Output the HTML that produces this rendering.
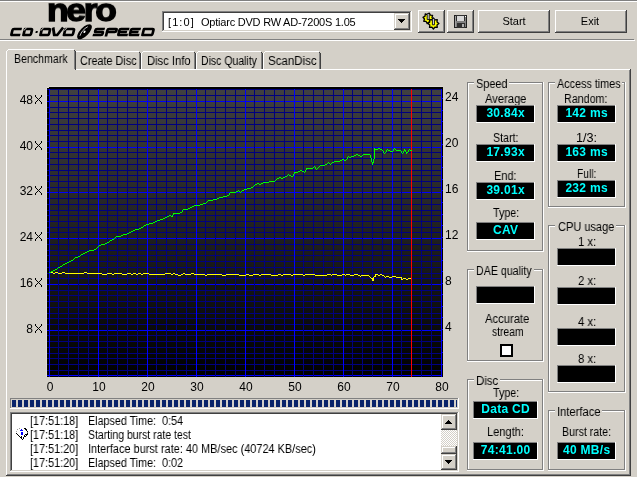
<!DOCTYPE html><html><head><meta charset="utf-8"><style>
html,body{margin:0;padding:0}
body{width:637px;height:477px;position:relative;overflow:hidden;background:#d4d0c8;font-family:"Liberation Sans",sans-serif;font-size:11px;color:#000}
.t{position:absolute;line-height:13px;white-space:pre;will-change:transform}
</style></head><body>
<div style="position:absolute;left:0px;top:0px;width:637px;height:1px;background:#808080;"></div>
<div style="position:absolute;left:0px;top:1px;width:637px;height:1px;background:#ffffff;"></div>
<div style="position:absolute;left:0px;top:39px;width:634px;height:1px;background:#808080;"></div>
<div style="position:absolute;left:0px;top:40px;width:635px;height:1px;background:#ffffff;"></div>
<div class="t" style="left:47px;top:-10.6px;font-size:34px;line-height:40px;font-weight:bold;letter-spacing:-2.2px;-webkit-text-stroke:1.4px #000;transform:scale(1.04,0.95);transform-origin:0 31px">nero</div>
<svg style="position:absolute;left:0;top:0" width="160" height="40"><g transform="translate(0,36) skewX(-14) translate(0,-36)"><path d="M20,29 H12 Q11,29 11,30 V34 Q11,35 12,35 H20 M23.2,29 H29.0 Q30.5,29 30.5,30.5 V33.5 Q30.5,35 29.0,35 H23.2 Z M40.2,29 H47.0 Q48.5,29 48.5,30.5 V33.5 Q48.5,35 47.0,35 H40.2 Z M51,27.5 L54,35 H57 L61,27.5 M63.7,29 H71.0 Q72.5,29 72.5,30.5 V33.5 Q72.5,35 71.0,35 H63.7 Z M103,29 H95 Q94,29 94,30 V31 Q94,32 95,32 H101 Q102,32 102,33 V34 Q102,35 101,35 H92.5 M106,36.5 V30 Q106,29 107,29 H114 Q115,29 115,30 V31 Q115,32 114,32 H106 M127.5,29 H119 Q118,29 118,30 V34 Q118,35 119,35 H127.5 M118,32 H126.0 M139.0,29 H130.5 Q129.5,29 129.5,30 V34 Q129.5,35 130.5,35 H139.0 M129.5,32 H137.5 M142.2,29 H150.5 Q152,29 152,30.5 V33.5 Q152,35 150.5,35 H142.2 Z" fill="none" stroke="#000" stroke-width="2.7" stroke-linejoin="round"/><rect x="34.6" y="31" width="2" height="2" fill="#000"/><path d="M22.4,30.6 L24.6,27.6" stroke="#d4d0c8" stroke-width="0.9"/><path d="M39.4,30.6 L41.6,27.6" stroke="#d4d0c8" stroke-width="0.9"/><path d="M62.9,30.6 L65.1,27.6" stroke="#d4d0c8" stroke-width="0.9"/></g><g transform="rotate(-46 84.5 31.8)"><ellipse cx="84.5" cy="31.8" rx="9.6" ry="4.3" fill="#000"/><path d="M78.5,31.3 Q84,28.6 90.5,30.6" stroke="#fff" stroke-width="0.7" fill="none"/><ellipse cx="84.5" cy="31.8" rx="1.3" ry="0.9" fill="#fff"/></g></svg>
<div style="position:absolute;left:162px;top:11px;width:250px;height:21px;background:#ffffff;"></div>
<div style="position:absolute;left:162px;top:11px;width:250px;height:1px;background:#808080;"></div>
<div style="position:absolute;left:162px;top:11px;width:1px;height:21px;background:#808080;"></div>
<div style="position:absolute;left:162px;top:31px;width:250px;height:1px;background:#ffffff;"></div>
<div style="position:absolute;left:411px;top:11px;width:1px;height:21px;background:#ffffff;"></div>
<div style="position:absolute;left:163px;top:12px;width:248px;height:1px;background:#404040;"></div>
<div style="position:absolute;left:163px;top:12px;width:1px;height:19px;background:#404040;"></div>
<div style="position:absolute;left:163px;top:30px;width:248px;height:1px;background:#d4d0c8;"></div>
<div style="position:absolute;left:410px;top:12px;width:1px;height:19px;background:#d4d0c8;"></div>
<div style="position:absolute;left:394px;top:13px;width:16px;height:17px;background:#d4d0c8;"></div>
<div style="position:absolute;left:395px;top:14px;width:14px;height:1px;background:#ffffff;"></div>
<div style="position:absolute;left:395px;top:14px;width:1px;height:15px;background:#ffffff;"></div>
<div style="position:absolute;left:394px;top:29px;width:16px;height:1px;background:#404040;"></div>
<div style="position:absolute;left:409px;top:13px;width:1px;height:17px;background:#404040;"></div>
<div style="position:absolute;left:395px;top:28px;width:14px;height:1px;background:#808080;"></div>
<div style="position:absolute;left:408px;top:14px;width:1px;height:15px;background:#808080;"></div>
<svg style="position:absolute;left:398px;top:19px" width="7" height="4" shape-rendering="crispEdges"><rect x="0" y="0" width="7" height="1"/><rect x="1" y="1" width="5" height="1"/><rect x="2" y="2" width="3" height="1"/><rect x="3" y="3" width="1" height="1"/></svg>
<div class="t" style="left:168px;top:16px;font-size:11px;font-weight:normal;color:#000;letter-spacing:1.1px">[1:0]</div>
<div class="t" style="left:201px;top:16px;font-size:11px;font-weight:normal;color:#000;letter-spacing:-0.22px">Optiarc DVD RW AD-7200S 1.05</div>
<div style="position:absolute;left:418px;top:10px;width:27px;height:1px;background:#ffffff;"></div>
<div style="position:absolute;left:418px;top:10px;width:1px;height:23px;background:#ffffff;"></div>
<div style="position:absolute;left:418px;top:32px;width:27px;height:1px;background:#404040;"></div>
<div style="position:absolute;left:444px;top:10px;width:1px;height:23px;background:#404040;"></div>
<div style="position:absolute;left:419px;top:31px;width:25px;height:1px;background:#808080;"></div>
<div style="position:absolute;left:443px;top:11px;width:1px;height:21px;background:#808080;"></div>
<div style="position:absolute;left:447px;top:10px;width:27px;height:1px;background:#ffffff;"></div>
<div style="position:absolute;left:447px;top:10px;width:1px;height:23px;background:#ffffff;"></div>
<div style="position:absolute;left:447px;top:32px;width:27px;height:1px;background:#404040;"></div>
<div style="position:absolute;left:473px;top:10px;width:1px;height:23px;background:#404040;"></div>
<div style="position:absolute;left:448px;top:31px;width:25px;height:1px;background:#808080;"></div>
<div style="position:absolute;left:472px;top:11px;width:1px;height:21px;background:#808080;"></div>
<div style="position:absolute;left:478px;top:10px;width:72px;height:1px;background:#ffffff;"></div>
<div style="position:absolute;left:478px;top:10px;width:1px;height:23px;background:#ffffff;"></div>
<div style="position:absolute;left:478px;top:32px;width:72px;height:1px;background:#404040;"></div>
<div style="position:absolute;left:549px;top:10px;width:1px;height:23px;background:#404040;"></div>
<div style="position:absolute;left:479px;top:31px;width:70px;height:1px;background:#808080;"></div>
<div style="position:absolute;left:548px;top:11px;width:1px;height:21px;background:#808080;"></div>
<div style="position:absolute;left:555px;top:10px;width:72px;height:1px;background:#ffffff;"></div>
<div style="position:absolute;left:555px;top:10px;width:1px;height:23px;background:#ffffff;"></div>
<div style="position:absolute;left:555px;top:32px;width:72px;height:1px;background:#404040;"></div>
<div style="position:absolute;left:626px;top:10px;width:1px;height:23px;background:#404040;"></div>
<div style="position:absolute;left:556px;top:31px;width:70px;height:1px;background:#808080;"></div>
<div style="position:absolute;left:625px;top:11px;width:1px;height:21px;background:#808080;"></div>
<svg style="position:absolute;left:418px;top:10px" width="27" height="23"><polygon points="15.39,9.35 13.35,10.42 13.13,12.72 10.93,12.03 9.15,13.49 8.08,11.45 5.78,11.23 6.47,9.03 5.01,7.25 7.05,6.18 7.27,3.88 9.47,4.57 11.25,3.11 12.32,5.15 14.62,5.37 13.93,7.57" fill="#ffff00" stroke="#000" stroke-width="1.3" stroke-linejoin="round"/><polygon points="20.90,13.50 19.00,14.99 19.29,17.39 16.89,17.10 15.40,19.00 13.91,17.10 11.51,17.39 11.80,14.99 9.90,13.50 11.80,12.01 11.51,9.61 13.91,9.90 15.40,8.00 16.89,9.90 19.29,9.61 19.00,12.01" fill="#ffff00" stroke="#000" stroke-width="1.3" stroke-linejoin="round"/><path d="M9.2,9.6 V4.4 L10.2,3.0 L11.2,4.4 V9.6 Z" fill="#e0e0f0" stroke="#000" stroke-width="0.9"/><path d="M14.4,14.8 V9.6 L15.4,8.2 L16.4,9.6 V14.8 Z" fill="#e0e0f0" stroke="#000" stroke-width="0.9"/></svg>
<svg style="position:absolute;left:454px;top:15px" width="13" height="13" shape-rendering="crispEdges"><rect x="0" y="0" width="13" height="13" fill="#202020"/><rect x="1" y="1" width="11" height="11" fill="#808080"/><rect x="1" y="1" width="1" height="11" fill="#a0a0a0"/><rect x="2" y="0" width="9" height="6" fill="#303030"/><rect x="3" y="1" width="7" height="5" fill="#d8d8d8"/><rect x="3" y="8" width="8" height="5" fill="#303030"/><rect x="8" y="9" width="2" height="3" fill="#b0b0b0"/><rect x="11" y="1" width="1" height="1" fill="#ffffff"/></svg>
<div class="t" style="left:414px;width:200px;text-align:center;top:15px;font-size:11px;font-weight:normal;color:#000;">Start</div>
<div class="t" style="left:490px;width:200px;text-align:center;top:15px;font-size:11px;font-weight:normal;color:#000;">Exit</div>
<div style="position:absolute;left:6px;top:69px;width:1px;height:406px;background:#ffffff;"></div>
<div style="position:absolute;left:6px;top:69px;width:624px;height:1px;background:#ffffff;"></div>
<div style="position:absolute;left:630px;top:69px;width:1px;height:407px;background:#404040;"></div>
<div style="position:absolute;left:629px;top:70px;width:1px;height:405px;background:#808080;"></div>
<div style="position:absolute;left:6px;top:475px;width:625px;height:1px;background:#404040;"></div>
<div style="position:absolute;left:7px;top:474px;width:623px;height:1px;background:#808080;"></div>
<div style="position:absolute;left:76px;top:51px;width:63px;height:1px;background:#ffffff;"></div>
<div style="position:absolute;left:74px;top:53px;width:1px;height:16px;background:#ffffff;"></div>
<div style="position:absolute;left:75px;top:52px;width:1px;height:1px;background:#ffffff;"></div>
<div style="position:absolute;left:139px;top:52px;width:1px;height:17px;background:#808080;"></div>
<div style="position:absolute;left:140px;top:53px;width:1px;height:16px;background:#404040;"></div>
<div style="position:absolute;left:139px;top:52px;width:1px;height:1px;background:#404040;"></div>
<div style="position:absolute;left:143px;top:51px;width:51px;height:1px;background:#ffffff;"></div>
<div style="position:absolute;left:141px;top:53px;width:1px;height:16px;background:#ffffff;"></div>
<div style="position:absolute;left:142px;top:52px;width:1px;height:1px;background:#ffffff;"></div>
<div style="position:absolute;left:194px;top:52px;width:1px;height:17px;background:#808080;"></div>
<div style="position:absolute;left:195px;top:53px;width:1px;height:16px;background:#404040;"></div>
<div style="position:absolute;left:194px;top:52px;width:1px;height:1px;background:#404040;"></div>
<div style="position:absolute;left:198px;top:51px;width:63px;height:1px;background:#ffffff;"></div>
<div style="position:absolute;left:196px;top:53px;width:1px;height:16px;background:#ffffff;"></div>
<div style="position:absolute;left:197px;top:52px;width:1px;height:1px;background:#ffffff;"></div>
<div style="position:absolute;left:261px;top:52px;width:1px;height:17px;background:#808080;"></div>
<div style="position:absolute;left:262px;top:53px;width:1px;height:16px;background:#404040;"></div>
<div style="position:absolute;left:261px;top:52px;width:1px;height:1px;background:#404040;"></div>
<div style="position:absolute;left:265px;top:51px;width:54px;height:1px;background:#ffffff;"></div>
<div style="position:absolute;left:263px;top:53px;width:1px;height:16px;background:#ffffff;"></div>
<div style="position:absolute;left:264px;top:52px;width:1px;height:1px;background:#ffffff;"></div>
<div style="position:absolute;left:319px;top:52px;width:1px;height:17px;background:#808080;"></div>
<div style="position:absolute;left:320px;top:53px;width:1px;height:16px;background:#404040;"></div>
<div style="position:absolute;left:319px;top:52px;width:1px;height:1px;background:#404040;"></div>
<div style="position:absolute;left:7px;top:50px;width:68px;height:20px;background:#d4d0c8;"></div>
<div style="position:absolute;left:8px;top:49px;width:66px;height:1px;background:#ffffff;"></div>
<div style="position:absolute;left:6px;top:51px;width:1px;height:19px;background:#ffffff;"></div>
<div style="position:absolute;left:7px;top:50px;width:1px;height:1px;background:#ffffff;"></div>
<div style="position:absolute;left:74px;top:50px;width:1px;height:20px;background:#808080;"></div>
<div style="position:absolute;left:75px;top:51px;width:1px;height:19px;background:#404040;"></div>
<div style="position:absolute;left:74px;top:50px;width:1px;height:1px;background:#404040;"></div>
<div style="position:absolute;left:7px;top:69px;width:68px;height:1px;background:#d4d0c8;"></div>
<div class="t" style="left:14.12px;top:53px;font-size:12px;transform:scaleX(0.8833);transform-origin:0 0;">Benchmark</div>
<div class="t" style="left:80.00px;top:55px;font-size:12px;transform:scaleX(0.9032);transform-origin:0 0;">Create Disc</div>
<div class="t" style="left:147.07px;top:55px;font-size:12px;transform:scaleX(0.9333);transform-origin:0 0;">Disc Info</div>
<div class="t" style="left:201.13px;top:55px;font-size:12px;transform:scaleX(0.8730);transform-origin:0 0;">Disc Quality</div>
<div class="t" style="left:268.04px;top:55px;font-size:12px;transform:scaleX(0.9592);transform-origin:0 0;">ScanDisc</div>
<svg style="position:absolute;left:46px;top:86px" width="398" height="292" shape-rendering="crispEdges">
<defs><linearGradient id="gr" x1="0" y1="0" x2="0" y2="1"><stop offset="0" stop-color="#404040"/><stop offset="1" stop-color="#000000"/></linearGradient></defs>
<rect x="0" y="2" width="1" height="289" fill="#dfdcd5"/>
<rect x="3" y="0" width="394" height="1" fill="#dfdcd5"/>
<rect x="1" y="1" width="2" height="1" fill="#dfdcd5"/>
<rect x="1" y="2" width="396" height="289" fill="#000"/>
<rect x="3" y="1" width="394" height="1" fill="#000"/>
<rect x="3" y="3" width="393" height="287" fill="url(#gr)"/>
<rect x="1" y="289" width="395" height="1" fill="#0000ff"/>
<rect x="1" y="284" width="395" height="1" fill="#000080"/>
<rect x="1" y="278" width="395" height="1" fill="#000080"/>
<rect x="1" y="272" width="395" height="1" fill="#000080"/>
<rect x="1" y="267" width="395" height="1" fill="#000080"/>
<rect x="1" y="261" width="395" height="1" fill="#000080"/>
<rect x="1" y="255" width="395" height="1" fill="#000080"/>
<rect x="1" y="249" width="395" height="1" fill="#000080"/>
<rect x="1" y="244" width="395" height="1" fill="#0000ff"/>
<rect x="1" y="238" width="395" height="1" fill="#000080"/>
<rect x="1" y="232" width="395" height="1" fill="#000080"/>
<rect x="1" y="227" width="395" height="1" fill="#000080"/>
<rect x="1" y="221" width="395" height="1" fill="#000080"/>
<rect x="1" y="215" width="395" height="1" fill="#000080"/>
<rect x="1" y="209" width="395" height="1" fill="#000080"/>
<rect x="1" y="204" width="395" height="1" fill="#000080"/>
<rect x="1" y="198" width="395" height="1" fill="#0000ff"/>
<rect x="1" y="192" width="395" height="1" fill="#000080"/>
<rect x="1" y="187" width="395" height="1" fill="#000080"/>
<rect x="1" y="181" width="395" height="1" fill="#000080"/>
<rect x="1" y="175" width="395" height="1" fill="#000080"/>
<rect x="1" y="169" width="395" height="1" fill="#000080"/>
<rect x="1" y="164" width="395" height="1" fill="#000080"/>
<rect x="1" y="158" width="395" height="1" fill="#000080"/>
<rect x="1" y="152" width="395" height="1" fill="#0000ff"/>
<rect x="1" y="146" width="395" height="1" fill="#000080"/>
<rect x="1" y="141" width="395" height="1" fill="#000080"/>
<rect x="1" y="135" width="395" height="1" fill="#000080"/>
<rect x="1" y="129" width="395" height="1" fill="#000080"/>
<rect x="1" y="124" width="395" height="1" fill="#000080"/>
<rect x="1" y="118" width="395" height="1" fill="#000080"/>
<rect x="1" y="112" width="395" height="1" fill="#000080"/>
<rect x="1" y="106" width="395" height="1" fill="#0000ff"/>
<rect x="1" y="101" width="395" height="1" fill="#000080"/>
<rect x="1" y="95" width="395" height="1" fill="#000080"/>
<rect x="1" y="89" width="395" height="1" fill="#000080"/>
<rect x="1" y="84" width="395" height="1" fill="#000080"/>
<rect x="1" y="78" width="395" height="1" fill="#000080"/>
<rect x="1" y="72" width="395" height="1" fill="#000080"/>
<rect x="1" y="66" width="395" height="1" fill="#000080"/>
<rect x="1" y="61" width="395" height="1" fill="#0000ff"/>
<rect x="1" y="55" width="395" height="1" fill="#000080"/>
<rect x="1" y="49" width="395" height="1" fill="#000080"/>
<rect x="1" y="44" width="395" height="1" fill="#000080"/>
<rect x="1" y="38" width="395" height="1" fill="#000080"/>
<rect x="1" y="32" width="395" height="1" fill="#000080"/>
<rect x="1" y="26" width="395" height="1" fill="#000080"/>
<rect x="1" y="21" width="395" height="1" fill="#000080"/>
<rect x="1" y="15" width="395" height="1" fill="#0000ff"/>
<rect x="1" y="9" width="395" height="1" fill="#000080"/>
<rect x="1" y="3" width="395" height="1" fill="#000080"/>
<rect x="3" y="3" width="1" height="288" fill="#0000ff"/>
<rect x="12" y="3" width="1" height="288" fill="#000080"/>
<rect x="22" y="3" width="1" height="288" fill="#000080"/>
<rect x="32" y="3" width="1" height="288" fill="#000080"/>
<rect x="42" y="3" width="1" height="288" fill="#000080"/>
<rect x="52" y="3" width="1" height="288" fill="#0000ff"/>
<rect x="61" y="3" width="1" height="288" fill="#000080"/>
<rect x="71" y="3" width="1" height="288" fill="#000080"/>
<rect x="81" y="3" width="1" height="288" fill="#000080"/>
<rect x="91" y="3" width="1" height="288" fill="#000080"/>
<rect x="101" y="3" width="1" height="288" fill="#0000ff"/>
<rect x="110" y="3" width="1" height="288" fill="#000080"/>
<rect x="120" y="3" width="1" height="288" fill="#000080"/>
<rect x="130" y="3" width="1" height="288" fill="#000080"/>
<rect x="140" y="3" width="1" height="288" fill="#000080"/>
<rect x="150" y="3" width="1" height="288" fill="#0000ff"/>
<rect x="159" y="3" width="1" height="288" fill="#000080"/>
<rect x="169" y="3" width="1" height="288" fill="#000080"/>
<rect x="179" y="3" width="1" height="288" fill="#000080"/>
<rect x="189" y="3" width="1" height="288" fill="#000080"/>
<rect x="199" y="3" width="1" height="288" fill="#0000ff"/>
<rect x="208" y="3" width="1" height="288" fill="#000080"/>
<rect x="218" y="3" width="1" height="288" fill="#000080"/>
<rect x="228" y="3" width="1" height="288" fill="#000080"/>
<rect x="238" y="3" width="1" height="288" fill="#000080"/>
<rect x="248" y="3" width="1" height="288" fill="#0000ff"/>
<rect x="257" y="3" width="1" height="288" fill="#000080"/>
<rect x="267" y="3" width="1" height="288" fill="#000080"/>
<rect x="277" y="3" width="1" height="288" fill="#000080"/>
<rect x="287" y="3" width="1" height="288" fill="#000080"/>
<rect x="297" y="3" width="1" height="288" fill="#0000ff"/>
<rect x="306" y="3" width="1" height="288" fill="#000080"/>
<rect x="316" y="3" width="1" height="288" fill="#000080"/>
<rect x="326" y="3" width="1" height="288" fill="#000080"/>
<rect x="336" y="3" width="1" height="288" fill="#000080"/>
<rect x="346" y="3" width="1" height="288" fill="#0000ff"/>
<rect x="355" y="3" width="1" height="288" fill="#000080"/>
<rect x="365" y="3" width="1" height="288" fill="#000080"/>
<rect x="375" y="3" width="1" height="288" fill="#000080"/>
<rect x="385" y="3" width="1" height="288" fill="#000080"/>
<rect x="395" y="3" width="1" height="288" fill="#0000ff"/>
<rect x="396" y="278" width="1" height="1" fill="#0000ff"/>
<rect x="396" y="266" width="1" height="1" fill="#0000ff"/>
<rect x="396" y="254" width="1" height="1" fill="#0000ff"/>
<rect x="396" y="243" width="1" height="1" fill="#0000ff"/>
<rect x="396" y="231" width="1" height="1" fill="#0000ff"/>
<rect x="396" y="220" width="1" height="1" fill="#0000ff"/>
<rect x="396" y="208" width="1" height="1" fill="#0000ff"/>
<rect x="396" y="197" width="1" height="1" fill="#0000ff"/>
<rect x="396" y="185" width="1" height="1" fill="#0000ff"/>
<rect x="396" y="174" width="1" height="1" fill="#0000ff"/>
<rect x="396" y="162" width="1" height="1" fill="#0000ff"/>
<rect x="396" y="151" width="1" height="1" fill="#0000ff"/>
<rect x="396" y="139" width="1" height="1" fill="#0000ff"/>
<rect x="396" y="128" width="1" height="1" fill="#0000ff"/>
<rect x="396" y="116" width="1" height="1" fill="#0000ff"/>
<rect x="396" y="104" width="1" height="1" fill="#0000ff"/>
<rect x="396" y="93" width="1" height="1" fill="#0000ff"/>
<rect x="396" y="81" width="1" height="1" fill="#0000ff"/>
<rect x="396" y="70" width="1" height="1" fill="#0000ff"/>
<rect x="396" y="58" width="1" height="1" fill="#0000ff"/>
<rect x="396" y="47" width="1" height="1" fill="#0000ff"/>
<rect x="396" y="35" width="1" height="1" fill="#0000ff"/>
<rect x="396" y="24" width="1" height="1" fill="#0000ff"/>
<rect x="396" y="12" width="1" height="1" fill="#0000ff"/>
<rect x="365" y="3" width="1" height="288" fill="#ff0000"/>
<g fill="#ffff00"><rect x="3" y="186" width="4" height="1"/><rect x="7" y="187" width="2" height="1"/><rect x="9" y="186" width="3" height="1"/><rect x="12" y="187" width="4" height="1"/><rect x="16" y="186" width="3" height="1"/><rect x="19" y="187" width="19" height="1"/><rect x="38" y="186" width="3" height="1"/><rect x="41" y="187" width="15" height="1"/><rect x="56" y="188" width="5" height="1"/><rect x="61" y="187" width="5" height="1"/><rect x="66" y="188" width="2" height="1"/><rect x="68" y="187" width="8" height="1"/><rect x="76" y="188" width="5" height="1"/><rect x="81" y="187" width="4" height="1"/><rect x="85" y="188" width="2" height="1"/><rect x="87" y="187" width="3" height="1"/><rect x="90" y="188" width="2" height="1"/><rect x="92" y="187" width="3" height="1"/><rect x="95" y="188" width="2" height="1"/><rect x="97" y="187" width="6" height="1"/><rect x="103" y="188" width="16" height="1"/><rect x="119" y="187" width="6" height="1"/><rect x="125" y="188" width="2" height="1"/><rect x="127" y="187" width="2" height="1"/><rect x="129" y="188" width="3" height="1"/><rect x="132" y="189" width="3" height="1"/><rect x="135" y="188" width="2" height="1"/><rect x="137" y="187" width="2" height="1"/><rect x="139" y="188" width="6" height="1"/><rect x="145" y="187" width="3" height="1"/><rect x="148" y="188" width="11" height="1"/><rect x="159" y="189" width="2" height="1"/><rect x="161" y="188" width="15" height="1"/><rect x="176" y="189" width="4" height="1"/><rect x="180" y="188" width="13" height="1"/><rect x="193" y="189" width="7" height="1"/><rect x="200" y="188" width="3" height="1"/><rect x="203" y="189" width="4" height="1"/><rect x="207" y="188" width="6" height="1"/><rect x="213" y="189" width="2" height="1"/><rect x="215" y="188" width="10" height="1"/><rect x="225" y="189" width="7" height="1"/><rect x="232" y="188" width="3" height="1"/><rect x="235" y="189" width="2" height="1"/><rect x="237" y="188" width="8" height="1"/><rect x="245" y="189" width="2" height="1"/><rect x="247" y="188" width="10" height="1"/><rect x="257" y="189" width="2" height="1"/><rect x="259" y="188" width="10" height="1"/><rect x="269" y="189" width="12" height="1"/><rect x="281" y="188" width="4" height="1"/><rect x="285" y="189" width="1" height="1"/><rect x="286" y="188" width="5" height="1"/><rect x="291" y="189" width="5" height="1"/><rect x="296" y="188" width="3" height="1"/><rect x="299" y="189" width="1" height="1"/><rect x="300" y="188" width="4" height="1"/><rect x="304" y="189" width="4" height="1"/><rect x="308" y="188" width="4" height="1"/><rect x="312" y="189" width="2" height="1"/><rect x="314" y="190" width="1" height="1"/><rect x="315" y="189" width="8" height="1"/><rect x="323" y="190" width="1" height="1"/><rect x="324" y="191" width="1" height="1"/><rect x="325" y="192" width="1" height="1"/><rect x="326" y="194" width="1" height="1"/><rect x="326" y="192" width="1" height="3"/><rect x="327" y="191" width="1" height="1"/><rect x="327" y="191" width="1" height="4"/><rect x="328" y="190" width="1" height="1"/><rect x="329" y="188" width="3" height="1"/><rect x="329" y="188" width="1" height="3"/><rect x="332" y="189" width="2" height="1"/><rect x="334" y="188" width="2" height="1"/><rect x="336" y="189" width="2" height="1"/><rect x="338" y="190" width="1" height="1"/><rect x="339" y="191" width="1" height="1"/><rect x="340" y="190" width="3" height="1"/><rect x="343" y="191" width="3" height="1"/><rect x="346" y="190" width="4" height="1"/><rect x="350" y="191" width="5" height="1"/><rect x="355" y="193" width="2" height="1"/><rect x="355" y="191" width="1" height="3"/><rect x="357" y="192" width="3" height="1"/><rect x="360" y="193" width="2" height="1"/><rect x="362" y="192" width="3" height="1"/></g>
<g fill="#00ff00"><rect x="53" y="159" width="2" height="1"/><rect x="328" y="67" width="1" height="1"/><rect x="338" y="67" width="1" height="1"/><rect x="356" y="67" width="1" height="1"/><rect x="360" y="67" width="1" height="1"/><rect x="127" y="127" width="7" height="1"/><rect x="328" y="63" width="4" height="1"/><rect x="334" y="63" width="2" height="1"/><rect x="341" y="63" width="1" height="1"/><rect x="347" y="63" width="1" height="1"/><rect x="349" y="63" width="1" height="1"/><rect x="358" y="63" width="1" height="1"/><rect x="363" y="63" width="1" height="1"/><rect x="43" y="164" width="5" height="1"/><rect x="310" y="68" width="2" height="1"/><rect x="317" y="68" width="7" height="1"/><rect x="328" y="68" width="1" height="1"/><rect x="98" y="139" width="2" height="1"/><rect x="148" y="119" width="6" height="1"/><rect x="296" y="73" width="2" height="1"/><rect x="300" y="73" width="1" height="1"/><rect x="325" y="73" width="1" height="1"/><rect x="327" y="73" width="1" height="1"/><rect x="328" y="64" width="1" height="1"/><rect x="336" y="64" width="1" height="1"/><rect x="340" y="64" width="1" height="1"/><rect x="342" y="64" width="2" height="1"/><rect x="347" y="64" width="1" height="1"/><rect x="350" y="64" width="5" height="1"/><rect x="358" y="64" width="2" height="1"/><rect x="362" y="64" width="1" height="1"/><rect x="364" y="64" width="2" height="1"/><rect x="260" y="83" width="1" height="1"/><rect x="270" y="83" width="1" height="1"/><rect x="173" y="111" width="4" height="1"/><rect x="328" y="65" width="1" height="1"/><rect x="337" y="65" width="1" height="1"/><rect x="340" y="65" width="1" height="1"/><rect x="344" y="65" width="3" height="1"/><rect x="355" y="65" width="1" height="1"/><rect x="357" y="65" width="1" height="1"/><rect x="359" y="65" width="1" height="1"/><rect x="362" y="65" width="1" height="1"/><rect x="103" y="137" width="4" height="1"/><rect x="190" y="105" width="2" height="1"/><rect x="193" y="105" width="1" height="1"/><rect x="195" y="105" width="1" height="1"/><rect x="294" y="74" width="2" height="1"/><rect x="298" y="74" width="2" height="1"/><rect x="325" y="74" width="1" height="1"/><rect x="327" y="74" width="1" height="1"/><rect x="64" y="154" width="2" height="1"/><rect x="233" y="91" width="2" height="1"/><rect x="237" y="91" width="2" height="1"/><rect x="162" y="114" width="5" height="1"/><rect x="288" y="75" width="6" height="1"/><rect x="325" y="75" width="1" height="1"/><rect x="327" y="75" width="1" height="1"/><rect x="41" y="165" width="2" height="1"/><rect x="217" y="96" width="6" height="1"/><rect x="95" y="141" width="2" height="1"/><rect x="328" y="66" width="1" height="1"/><rect x="337" y="66" width="1" height="1"/><rect x="339" y="66" width="1" height="1"/><rect x="355" y="66" width="1" height="1"/><rect x="357" y="66" width="1" height="1"/><rect x="360" y="66" width="2" height="1"/><rect x="279" y="78" width="2" height="1"/><rect x="284" y="78" width="1" height="1"/><rect x="326" y="78" width="1" height="1"/><rect x="184" y="106" width="6" height="1"/><rect x="194" y="106" width="1" height="1"/><rect x="252" y="85" width="2" height="1"/><rect x="256" y="85" width="2" height="1"/><rect x="259" y="85" width="1" height="1"/><rect x="55" y="158" width="4" height="1"/><rect x="48" y="163" width="2" height="1"/><rect x="302" y="70" width="1" height="1"/><rect x="305" y="70" width="3" height="1"/><rect x="314" y="70" width="2" height="1"/><rect x="324" y="70" width="1" height="1"/><rect x="328" y="70" width="1" height="1"/><rect x="301" y="72" width="1" height="1"/><rect x="325" y="72" width="1" height="1"/><rect x="328" y="72" width="1" height="1"/><rect x="89" y="143" width="4" height="1"/><rect x="121" y="130" width="2" height="1"/><rect x="125" y="130" width="2" height="1"/><rect x="260" y="82" width="7" height="1"/><rect x="269" y="82" width="1" height="1"/><rect x="271" y="82" width="1" height="1"/><rect x="301" y="71" width="1" height="1"/><rect x="303" y="71" width="2" height="1"/><rect x="324" y="71" width="1" height="1"/><rect x="328" y="71" width="1" height="1"/><rect x="308" y="69" width="2" height="1"/><rect x="312" y="69" width="2" height="1"/><rect x="316" y="69" width="1" height="1"/><rect x="324" y="69" width="1" height="1"/><rect x="328" y="69" width="1" height="1"/><rect x="75" y="149" width="2" height="1"/><rect x="267" y="81" width="1" height="1"/><rect x="269" y="81" width="1" height="1"/><rect x="272" y="81" width="1" height="1"/><rect x="160" y="116" width="1" height="1"/><rect x="32" y="170" width="2" height="1"/><rect x="328" y="62" width="1" height="1"/><rect x="332" y="62" width="2" height="1"/><rect x="348" y="62" width="1" height="1"/><rect x="37" y="167" width="2" height="1"/><rect x="239" y="90" width="2" height="1"/><rect x="245" y="90" width="2" height="1"/><rect x="117" y="132" width="2" height="1"/><rect x="171" y="112" width="2" height="1"/><rect x="198" y="103" width="3" height="1"/><rect x="52" y="160" width="1" height="1"/><rect x="242" y="88" width="1" height="1"/><rect x="247" y="88" width="1" height="1"/><rect x="209" y="98" width="2" height="1"/><rect x="213" y="98" width="2" height="1"/><rect x="177" y="110" width="4" height="1"/><rect x="229" y="94" width="1" height="1"/><rect x="205" y="101" width="2" height="1"/><rect x="100" y="138" width="3" height="1"/><rect x="154" y="118" width="3" height="1"/><rect x="137" y="123" width="5" height="1"/><rect x="66" y="153" width="2" height="1"/><rect x="231" y="92" width="2" height="1"/><rect x="235" y="92" width="2" height="1"/><rect x="25" y="174" width="2" height="1"/><rect x="111" y="134" width="3" height="1"/><rect x="29" y="171" width="3" height="1"/><rect x="144" y="121" width="2" height="1"/><rect x="223" y="95" width="6" height="1"/><rect x="274" y="79" width="5" height="1"/><rect x="192" y="104" width="1" height="1"/><rect x="196" y="104" width="2" height="1"/><rect x="123" y="129" width="2" height="1"/><rect x="126" y="129" width="1" height="1"/><rect x="70" y="150" width="5" height="1"/><rect x="63" y="155" width="1" height="1"/><rect x="93" y="142" width="2" height="1"/><rect x="21" y="176" width="2" height="1"/><rect x="9" y="183" width="2" height="1"/><rect x="12" y="181" width="2" height="1"/><rect x="254" y="84" width="2" height="1"/><rect x="259" y="84" width="1" height="1"/><rect x="77" y="148" width="4" height="1"/><rect x="27" y="173" width="1" height="1"/><rect x="167" y="113" width="4" height="1"/><rect x="136" y="125" width="1" height="1"/><rect x="281" y="77" width="1" height="1"/><rect x="283" y="77" width="1" height="1"/><rect x="285" y="77" width="1" height="1"/><rect x="326" y="77" width="1" height="1"/><rect x="201" y="102" width="4" height="1"/><rect x="39" y="166" width="2" height="1"/><rect x="241" y="89" width="1" height="1"/><rect x="243" y="89" width="2" height="1"/><rect x="247" y="89" width="1" height="1"/><rect x="119" y="131" width="2" height="1"/><rect x="59" y="157" width="2" height="1"/><rect x="268" y="80" width="1" height="1"/><rect x="273" y="80" width="1" height="1"/><rect x="282" y="76" width="1" height="1"/><rect x="286" y="76" width="2" height="1"/><rect x="326" y="76" width="2" height="1"/><rect x="157" y="117" width="3" height="1"/><rect x="211" y="97" width="2" height="1"/><rect x="215" y="97" width="2" height="1"/><rect x="5" y="185" width="2" height="1"/><rect x="51" y="161" width="1" height="1"/><rect x="181" y="109" width="2" height="1"/><rect x="23" y="175" width="2" height="1"/><rect x="69" y="151" width="1" height="1"/><rect x="109" y="135" width="2" height="1"/><rect x="14" y="180" width="2" height="1"/><rect x="146" y="120" width="2" height="1"/><rect x="114" y="133" width="3" height="1"/><rect x="85" y="145" width="2" height="1"/><rect x="248" y="86" width="4" height="1"/><rect x="258" y="86" width="1" height="1"/><rect x="81" y="147" width="2" height="1"/><rect x="208" y="99" width="1" height="1"/><rect x="61" y="156" width="2" height="1"/><rect x="19" y="177" width="2" height="1"/><rect x="127" y="128" width="1" height="1"/><rect x="11" y="182" width="1" height="1"/><rect x="142" y="122" width="2" height="1"/><rect x="107" y="136" width="2" height="1"/><rect x="34" y="169" width="1" height="1"/><rect x="7" y="184" width="2" height="1"/><rect x="183" y="108" width="1" height="1"/><rect x="3" y="186" width="2" height="1"/><rect x="134" y="126" width="2" height="1"/><rect x="87" y="144" width="2" height="1"/><rect x="183" y="107" width="1" height="1"/><rect x="161" y="115" width="1" height="1"/><rect x="17" y="178" width="2" height="1"/><rect x="68" y="152" width="1" height="1"/><rect x="83" y="146" width="2" height="1"/><rect x="35" y="168" width="2" height="1"/><rect x="248" y="87" width="1" height="1"/><rect x="136" y="124" width="1" height="1"/><rect x="28" y="172" width="1" height="1"/><rect x="97" y="140" width="1" height="1"/><rect x="16" y="179" width="1" height="1"/><rect x="207" y="100" width="1" height="1"/><rect x="230" y="93" width="1" height="1"/><rect x="50" y="162" width="1" height="1"/></g>
</svg>
<div class="t" style="left:0;width:33px;text-align:right;top:94px;font-size:12px">48</div>
<svg style="position:absolute;left:35px;top:95px" width="7" height="9" shape-rendering="crispEdges"><rect x="0" y="0" width="1" height="1"/><rect x="0" y="1" width="1" height="1"/><rect x="6" y="0" width="1" height="1"/><rect x="6" y="1" width="1" height="1"/><rect x="1" y="2" width="1" height="1"/><rect x="5" y="2" width="1" height="1"/><rect x="2" y="3" width="1" height="1"/><rect x="4" y="3" width="1" height="1"/><rect x="3" y="4" width="1" height="1"/><rect x="2" y="5" width="1" height="1"/><rect x="4" y="5" width="1" height="1"/><rect x="1" y="6" width="1" height="1"/><rect x="5" y="6" width="1" height="1"/><rect x="0" y="7" width="1" height="1"/><rect x="0" y="8" width="1" height="1"/><rect x="6" y="7" width="1" height="1"/><rect x="6" y="8" width="1" height="1"/></svg>
<div class="t" style="left:0;width:33px;text-align:right;top:140px;font-size:12px">40</div>
<svg style="position:absolute;left:35px;top:141px" width="7" height="9" shape-rendering="crispEdges"><rect x="0" y="0" width="1" height="1"/><rect x="0" y="1" width="1" height="1"/><rect x="6" y="0" width="1" height="1"/><rect x="6" y="1" width="1" height="1"/><rect x="1" y="2" width="1" height="1"/><rect x="5" y="2" width="1" height="1"/><rect x="2" y="3" width="1" height="1"/><rect x="4" y="3" width="1" height="1"/><rect x="3" y="4" width="1" height="1"/><rect x="2" y="5" width="1" height="1"/><rect x="4" y="5" width="1" height="1"/><rect x="1" y="6" width="1" height="1"/><rect x="5" y="6" width="1" height="1"/><rect x="0" y="7" width="1" height="1"/><rect x="0" y="8" width="1" height="1"/><rect x="6" y="7" width="1" height="1"/><rect x="6" y="8" width="1" height="1"/></svg>
<div class="t" style="left:0;width:33px;text-align:right;top:185px;font-size:12px">32</div>
<svg style="position:absolute;left:35px;top:186px" width="7" height="9" shape-rendering="crispEdges"><rect x="0" y="0" width="1" height="1"/><rect x="0" y="1" width="1" height="1"/><rect x="6" y="0" width="1" height="1"/><rect x="6" y="1" width="1" height="1"/><rect x="1" y="2" width="1" height="1"/><rect x="5" y="2" width="1" height="1"/><rect x="2" y="3" width="1" height="1"/><rect x="4" y="3" width="1" height="1"/><rect x="3" y="4" width="1" height="1"/><rect x="2" y="5" width="1" height="1"/><rect x="4" y="5" width="1" height="1"/><rect x="1" y="6" width="1" height="1"/><rect x="5" y="6" width="1" height="1"/><rect x="0" y="7" width="1" height="1"/><rect x="0" y="8" width="1" height="1"/><rect x="6" y="7" width="1" height="1"/><rect x="6" y="8" width="1" height="1"/></svg>
<div class="t" style="left:0;width:33px;text-align:right;top:231px;font-size:12px">24</div>
<svg style="position:absolute;left:35px;top:232px" width="7" height="9" shape-rendering="crispEdges"><rect x="0" y="0" width="1" height="1"/><rect x="0" y="1" width="1" height="1"/><rect x="6" y="0" width="1" height="1"/><rect x="6" y="1" width="1" height="1"/><rect x="1" y="2" width="1" height="1"/><rect x="5" y="2" width="1" height="1"/><rect x="2" y="3" width="1" height="1"/><rect x="4" y="3" width="1" height="1"/><rect x="3" y="4" width="1" height="1"/><rect x="2" y="5" width="1" height="1"/><rect x="4" y="5" width="1" height="1"/><rect x="1" y="6" width="1" height="1"/><rect x="5" y="6" width="1" height="1"/><rect x="0" y="7" width="1" height="1"/><rect x="0" y="8" width="1" height="1"/><rect x="6" y="7" width="1" height="1"/><rect x="6" y="8" width="1" height="1"/></svg>
<div class="t" style="left:0;width:33px;text-align:right;top:277px;font-size:12px">16</div>
<svg style="position:absolute;left:35px;top:278px" width="7" height="9" shape-rendering="crispEdges"><rect x="0" y="0" width="1" height="1"/><rect x="0" y="1" width="1" height="1"/><rect x="6" y="0" width="1" height="1"/><rect x="6" y="1" width="1" height="1"/><rect x="1" y="2" width="1" height="1"/><rect x="5" y="2" width="1" height="1"/><rect x="2" y="3" width="1" height="1"/><rect x="4" y="3" width="1" height="1"/><rect x="3" y="4" width="1" height="1"/><rect x="2" y="5" width="1" height="1"/><rect x="4" y="5" width="1" height="1"/><rect x="1" y="6" width="1" height="1"/><rect x="5" y="6" width="1" height="1"/><rect x="0" y="7" width="1" height="1"/><rect x="0" y="8" width="1" height="1"/><rect x="6" y="7" width="1" height="1"/><rect x="6" y="8" width="1" height="1"/></svg>
<div class="t" style="left:0;width:33px;text-align:right;top:323px;font-size:12px">8</div>
<svg style="position:absolute;left:35px;top:324px" width="7" height="9" shape-rendering="crispEdges"><rect x="0" y="0" width="1" height="1"/><rect x="0" y="1" width="1" height="1"/><rect x="6" y="0" width="1" height="1"/><rect x="6" y="1" width="1" height="1"/><rect x="1" y="2" width="1" height="1"/><rect x="5" y="2" width="1" height="1"/><rect x="2" y="3" width="1" height="1"/><rect x="4" y="3" width="1" height="1"/><rect x="3" y="4" width="1" height="1"/><rect x="2" y="5" width="1" height="1"/><rect x="4" y="5" width="1" height="1"/><rect x="1" y="6" width="1" height="1"/><rect x="5" y="6" width="1" height="1"/><rect x="0" y="7" width="1" height="1"/><rect x="0" y="8" width="1" height="1"/><rect x="6" y="7" width="1" height="1"/><rect x="6" y="8" width="1" height="1"/></svg>
<div class="t" style="left:445px;top:91px;font-size:12px">24</div>
<div class="t" style="left:445px;top:137px;font-size:12px">20</div>
<div class="t" style="left:445px;top:183px;font-size:12px">16</div>
<div class="t" style="left:445px;top:229px;font-size:12px">12</div>
<div class="t" style="left:445px;top:275px;font-size:12px">8</div>
<div class="t" style="left:445px;top:321px;font-size:12px">4</div>
<div class="t" style="left:0px;width:100px;text-align:center;top:381px;font-size:12px">0</div>
<div class="t" style="left:49px;width:100px;text-align:center;top:381px;font-size:12px">10</div>
<div class="t" style="left:98px;width:100px;text-align:center;top:381px;font-size:12px">20</div>
<div class="t" style="left:147px;width:100px;text-align:center;top:381px;font-size:12px">30</div>
<div class="t" style="left:196px;width:100px;text-align:center;top:381px;font-size:12px">40</div>
<div class="t" style="left:245px;width:100px;text-align:center;top:381px;font-size:12px">50</div>
<div class="t" style="left:294px;width:100px;text-align:center;top:381px;font-size:12px">60</div>
<div class="t" style="left:343px;width:100px;text-align:center;top:381px;font-size:12px">70</div>
<div class="t" style="left:392px;width:100px;text-align:center;top:381px;font-size:12px">80</div>
<div style="position:absolute;left:467px;top:82px;width:77px;height:1px;background:#808080;"></div>
<div style="position:absolute;left:467px;top:82px;width:1px;height:170px;background:#808080;"></div>
<div style="position:absolute;left:467px;top:251px;width:77px;height:1px;background:#ffffff;"></div>
<div style="position:absolute;left:543px;top:82px;width:1px;height:170px;background:#ffffff;"></div>
<div style="position:absolute;left:468px;top:83px;width:75px;height:1px;background:#ffffff;"></div>
<div style="position:absolute;left:468px;top:83px;width:1px;height:168px;background:#ffffff;"></div>
<div style="position:absolute;left:468px;top:250px;width:75px;height:1px;background:#808080;"></div>
<div style="position:absolute;left:542px;top:83px;width:1px;height:168px;background:#808080;"></div>
<div style="position:absolute;left:474px;top:82px;width:35px;height:2px;background:#d4d0c8;"></div>
<div class="t" style="left:476.09px;top:78px;font-size:12px;transform:scaleX(0.9091);transform-origin:0 0;">Speed</div>
<div class="t" style="left:485.00px;top:93px;font-size:12px;transform:scaleX(0.9318);transform-origin:0 0;">Average</div>
<div style="position:absolute;left:476px;top:105px;width:59px;height:18px;background:#000;"></div>
<div style="position:absolute;left:476px;top:105px;width:59px;height:1px;background:#808080;"></div>
<div style="position:absolute;left:476px;top:105px;width:1px;height:18px;background:#808080;"></div>
<div style="position:absolute;left:476px;top:122px;width:59px;height:1px;background:#ffffff;"></div>
<div style="position:absolute;left:534px;top:105px;width:1px;height:18px;background:#ffffff;"></div>
<div class="t" style="left:476px;width:59px;text-align:center;top:107px;font-size:12px;font-weight:bold;color:#00ffff;letter-spacing:0.3px;text-indent:0.3px">30.84x</div>
<div class="t" style="left:493.11px;top:132px;font-size:12px;transform:scaleX(0.8889);transform-origin:0 0;">Start:</div>
<div style="position:absolute;left:476px;top:144px;width:59px;height:18px;background:#000;"></div>
<div style="position:absolute;left:476px;top:144px;width:59px;height:1px;background:#808080;"></div>
<div style="position:absolute;left:476px;top:144px;width:1px;height:18px;background:#808080;"></div>
<div style="position:absolute;left:476px;top:161px;width:59px;height:1px;background:#ffffff;"></div>
<div style="position:absolute;left:534px;top:144px;width:1px;height:18px;background:#ffffff;"></div>
<div class="t" style="left:476px;width:59px;text-align:center;top:146px;font-size:12px;font-weight:bold;color:#00ffff;letter-spacing:0.3px;text-indent:0.3px">17.93x</div>
<div class="t" style="left:494.09px;top:170px;font-size:12px;transform:scaleX(0.9130);transform-origin:0 0;">End:</div>
<div style="position:absolute;left:476px;top:182px;width:59px;height:18px;background:#000;"></div>
<div style="position:absolute;left:476px;top:182px;width:59px;height:1px;background:#808080;"></div>
<div style="position:absolute;left:476px;top:182px;width:1px;height:18px;background:#808080;"></div>
<div style="position:absolute;left:476px;top:199px;width:59px;height:1px;background:#ffffff;"></div>
<div style="position:absolute;left:534px;top:182px;width:1px;height:18px;background:#ffffff;"></div>
<div class="t" style="left:476px;width:59px;text-align:center;top:184px;font-size:12px;font-weight:bold;color:#00ffff;letter-spacing:0.3px;text-indent:0.3px">39.01x</div>
<div class="t" style="left:493.00px;top:207px;font-size:12px;transform:scaleX(0.8929);transform-origin:0 0;">Type:</div>
<div style="position:absolute;left:476px;top:222px;width:59px;height:18px;background:#000;"></div>
<div style="position:absolute;left:476px;top:222px;width:59px;height:1px;background:#808080;"></div>
<div style="position:absolute;left:476px;top:222px;width:1px;height:18px;background:#808080;"></div>
<div style="position:absolute;left:476px;top:239px;width:59px;height:1px;background:#ffffff;"></div>
<div style="position:absolute;left:534px;top:222px;width:1px;height:18px;background:#ffffff;"></div>
<div class="t" style="left:476px;width:59px;text-align:center;top:224px;font-size:12px;font-weight:bold;color:#00ffff;letter-spacing:0.3px;text-indent:0.3px">CAV</div>
<div style="position:absolute;left:548px;top:82px;width:78px;height:1px;background:#808080;"></div>
<div style="position:absolute;left:548px;top:82px;width:1px;height:126px;background:#808080;"></div>
<div style="position:absolute;left:548px;top:207px;width:78px;height:1px;background:#ffffff;"></div>
<div style="position:absolute;left:625px;top:82px;width:1px;height:126px;background:#ffffff;"></div>
<div style="position:absolute;left:549px;top:83px;width:76px;height:1px;background:#ffffff;"></div>
<div style="position:absolute;left:549px;top:83px;width:1px;height:124px;background:#ffffff;"></div>
<div style="position:absolute;left:549px;top:206px;width:76px;height:1px;background:#808080;"></div>
<div style="position:absolute;left:624px;top:83px;width:1px;height:124px;background:#808080;"></div>
<div style="position:absolute;left:555px;top:82px;width:67px;height:2px;background:#d4d0c8;"></div>
<div class="t" style="left:557.00px;top:78px;font-size:12px;transform:scaleX(0.9000);transform-origin:0 0;">Access times</div>
<div class="t" style="left:564.11px;top:93px;font-size:12px;transform:scaleX(0.8936);transform-origin:0 0;">Random:</div>
<div style="position:absolute;left:557px;top:105px;width:59px;height:18px;background:#000;"></div>
<div style="position:absolute;left:557px;top:105px;width:59px;height:1px;background:#808080;"></div>
<div style="position:absolute;left:557px;top:105px;width:1px;height:18px;background:#808080;"></div>
<div style="position:absolute;left:557px;top:122px;width:59px;height:1px;background:#ffffff;"></div>
<div style="position:absolute;left:615px;top:105px;width:1px;height:18px;background:#ffffff;"></div>
<div class="t" style="left:557px;width:59px;text-align:center;top:107px;font-size:12px;font-weight:bold;color:#00ffff;letter-spacing:0.3px;text-indent:0.3px">142 ms</div>
<div class="t" style="left:575.94px;top:132px;font-size:12px;transform:scaleX(1.0556);transform-origin:0 0;">1/3:</div>
<div style="position:absolute;left:557px;top:144px;width:59px;height:18px;background:#000;"></div>
<div style="position:absolute;left:557px;top:144px;width:59px;height:1px;background:#808080;"></div>
<div style="position:absolute;left:557px;top:144px;width:1px;height:18px;background:#808080;"></div>
<div style="position:absolute;left:557px;top:161px;width:59px;height:1px;background:#ffffff;"></div>
<div style="position:absolute;left:615px;top:144px;width:1px;height:18px;background:#ffffff;"></div>
<div class="t" style="left:557px;width:59px;text-align:center;top:146px;font-size:12px;font-weight:bold;color:#00ffff;letter-spacing:0.3px;text-indent:0.3px">163 ms</div>
<div class="t" style="left:577.14px;top:168px;font-size:12px;transform:scaleX(0.8571);transform-origin:0 0;">Full:</div>
<div style="position:absolute;left:557px;top:180px;width:59px;height:18px;background:#000;"></div>
<div style="position:absolute;left:557px;top:180px;width:59px;height:1px;background:#808080;"></div>
<div style="position:absolute;left:557px;top:180px;width:1px;height:18px;background:#808080;"></div>
<div style="position:absolute;left:557px;top:197px;width:59px;height:1px;background:#ffffff;"></div>
<div style="position:absolute;left:615px;top:180px;width:1px;height:18px;background:#ffffff;"></div>
<div class="t" style="left:557px;width:59px;text-align:center;top:182px;font-size:12px;font-weight:bold;color:#00ffff;letter-spacing:0.3px;text-indent:0.3px">232 ms</div>
<div style="position:absolute;left:548px;top:225px;width:78px;height:1px;background:#808080;"></div>
<div style="position:absolute;left:548px;top:225px;width:1px;height:168px;background:#808080;"></div>
<div style="position:absolute;left:548px;top:392px;width:78px;height:1px;background:#ffffff;"></div>
<div style="position:absolute;left:625px;top:225px;width:1px;height:168px;background:#ffffff;"></div>
<div style="position:absolute;left:549px;top:226px;width:76px;height:1px;background:#ffffff;"></div>
<div style="position:absolute;left:549px;top:226px;width:1px;height:166px;background:#ffffff;"></div>
<div style="position:absolute;left:549px;top:391px;width:76px;height:1px;background:#808080;"></div>
<div style="position:absolute;left:624px;top:226px;width:1px;height:166px;background:#808080;"></div>
<div style="position:absolute;left:555px;top:225px;width:61px;height:2px;background:#d4d0c8;"></div>
<div class="t" style="left:558.00px;top:221px;font-size:12px;transform:scaleX(0.9180);transform-origin:0 0;">CPU usage</div>
<div class="t" style="left:578.06px;top:236px;font-size:12px;transform:scaleX(0.9412);transform-origin:0 0;">1 x:</div>
<div style="position:absolute;left:557px;top:248px;width:59px;height:18px;background:#000;"></div>
<div style="position:absolute;left:557px;top:248px;width:59px;height:1px;background:#808080;"></div>
<div style="position:absolute;left:557px;top:248px;width:1px;height:18px;background:#808080;"></div>
<div style="position:absolute;left:557px;top:265px;width:59px;height:1px;background:#ffffff;"></div>
<div style="position:absolute;left:615px;top:248px;width:1px;height:18px;background:#ffffff;"></div>
<div class="t" style="left:578.00px;top:275px;font-size:12px;transform:scaleX(0.9444);transform-origin:0 0;">2 x:</div>
<div style="position:absolute;left:557px;top:287px;width:59px;height:18px;background:#000;"></div>
<div style="position:absolute;left:557px;top:287px;width:59px;height:1px;background:#808080;"></div>
<div style="position:absolute;left:557px;top:287px;width:1px;height:18px;background:#808080;"></div>
<div style="position:absolute;left:557px;top:304px;width:59px;height:1px;background:#ffffff;"></div>
<div style="position:absolute;left:615px;top:287px;width:1px;height:18px;background:#ffffff;"></div>
<div class="t" style="left:578.00px;top:316px;font-size:12px;transform:scaleX(0.9444);transform-origin:0 0;">4 x:</div>
<div style="position:absolute;left:557px;top:328px;width:59px;height:18px;background:#000;"></div>
<div style="position:absolute;left:557px;top:328px;width:59px;height:1px;background:#808080;"></div>
<div style="position:absolute;left:557px;top:328px;width:1px;height:18px;background:#808080;"></div>
<div style="position:absolute;left:557px;top:345px;width:59px;height:1px;background:#ffffff;"></div>
<div style="position:absolute;left:615px;top:328px;width:1px;height:18px;background:#ffffff;"></div>
<div class="t" style="left:578.00px;top:353px;font-size:12px;transform:scaleX(0.9444);transform-origin:0 0;">8 x:</div>
<div style="position:absolute;left:557px;top:365px;width:59px;height:18px;background:#000;"></div>
<div style="position:absolute;left:557px;top:365px;width:59px;height:1px;background:#808080;"></div>
<div style="position:absolute;left:557px;top:365px;width:1px;height:18px;background:#808080;"></div>
<div style="position:absolute;left:557px;top:382px;width:59px;height:1px;background:#ffffff;"></div>
<div style="position:absolute;left:615px;top:365px;width:1px;height:18px;background:#ffffff;"></div>
<div style="position:absolute;left:467px;top:269px;width:77px;height:1px;background:#808080;"></div>
<div style="position:absolute;left:467px;top:269px;width:1px;height:93px;background:#808080;"></div>
<div style="position:absolute;left:467px;top:361px;width:77px;height:1px;background:#ffffff;"></div>
<div style="position:absolute;left:543px;top:269px;width:1px;height:93px;background:#ffffff;"></div>
<div style="position:absolute;left:468px;top:270px;width:75px;height:1px;background:#ffffff;"></div>
<div style="position:absolute;left:468px;top:270px;width:1px;height:91px;background:#ffffff;"></div>
<div style="position:absolute;left:468px;top:360px;width:75px;height:1px;background:#808080;"></div>
<div style="position:absolute;left:542px;top:270px;width:1px;height:91px;background:#808080;"></div>
<div style="position:absolute;left:474px;top:269px;width:60px;height:2px;background:#d4d0c8;"></div>
<div class="t" style="left:476.11px;top:265px;font-size:12px;transform:scaleX(0.8871);transform-origin:0 0;">DAE quality</div>
<div style="position:absolute;left:476px;top:286px;width:59px;height:18px;background:#000;"></div>
<div style="position:absolute;left:476px;top:286px;width:59px;height:1px;background:#808080;"></div>
<div style="position:absolute;left:476px;top:286px;width:1px;height:18px;background:#808080;"></div>
<div style="position:absolute;left:476px;top:303px;width:59px;height:1px;background:#ffffff;"></div>
<div style="position:absolute;left:534px;top:286px;width:1px;height:18px;background:#ffffff;"></div>
<div class="t" style="left:485.00px;top:313px;font-size:12px;transform:scaleX(0.9362);transform-origin:0 0;">Accurate</div>
<div class="t" style="left:492.00px;top:326px;font-size:12px;transform:scaleX(0.8611);transform-origin:0 0;">stream</div>
<div style="position:absolute;left:500px;top:344px;width:13px;height:13px;background:#000;"></div>
<div style="position:absolute;left:502px;top:346px;width:9px;height:9px;background:#fff;"></div>
<div style="position:absolute;left:467px;top:379px;width:77px;height:1px;background:#808080;"></div>
<div style="position:absolute;left:467px;top:379px;width:1px;height:92px;background:#808080;"></div>
<div style="position:absolute;left:467px;top:470px;width:77px;height:1px;background:#ffffff;"></div>
<div style="position:absolute;left:543px;top:379px;width:1px;height:92px;background:#ffffff;"></div>
<div style="position:absolute;left:468px;top:380px;width:75px;height:1px;background:#ffffff;"></div>
<div style="position:absolute;left:468px;top:380px;width:1px;height:90px;background:#ffffff;"></div>
<div style="position:absolute;left:468px;top:469px;width:75px;height:1px;background:#808080;"></div>
<div style="position:absolute;left:542px;top:380px;width:1px;height:90px;background:#808080;"></div>
<div style="position:absolute;left:474px;top:379px;width:26px;height:2px;background:#d4d0c8;"></div>
<div class="t" style="left:476.05px;top:375px;font-size:12px;transform:scaleX(0.9545);transform-origin:0 0;">Disc</div>
<div class="t" style="left:493.00px;top:387px;font-size:12px;transform:scaleX(0.8929);transform-origin:0 0;">Type:</div>
<div style="position:absolute;left:473px;top:401px;width:65px;height:18px;background:#000;"></div>
<div style="position:absolute;left:473px;top:401px;width:65px;height:1px;background:#808080;"></div>
<div style="position:absolute;left:473px;top:401px;width:1px;height:18px;background:#808080;"></div>
<div style="position:absolute;left:473px;top:418px;width:65px;height:1px;background:#ffffff;"></div>
<div style="position:absolute;left:537px;top:401px;width:1px;height:18px;background:#ffffff;"></div>
<div class="t" style="left:473px;width:65px;text-align:center;top:403px;font-size:12px;font-weight:bold;color:#00ffff;letter-spacing:0.3px;text-indent:0.3px">Data CD</div>
<div class="t" style="left:487.08px;top:426px;font-size:12px;transform:scaleX(0.9211);transform-origin:0 0;">Length:</div>
<div style="position:absolute;left:473px;top:442px;width:65px;height:18px;background:#000;"></div>
<div style="position:absolute;left:473px;top:442px;width:65px;height:1px;background:#808080;"></div>
<div style="position:absolute;left:473px;top:442px;width:1px;height:18px;background:#808080;"></div>
<div style="position:absolute;left:473px;top:459px;width:65px;height:1px;background:#ffffff;"></div>
<div style="position:absolute;left:537px;top:442px;width:1px;height:18px;background:#ffffff;"></div>
<div class="t" style="left:473px;width:65px;text-align:center;top:444px;font-size:12px;font-weight:bold;color:#00ffff;letter-spacing:0.3px;text-indent:0.3px">74:41.00</div>
<div style="position:absolute;left:548px;top:410px;width:78px;height:1px;background:#808080;"></div>
<div style="position:absolute;left:548px;top:410px;width:1px;height:61px;background:#808080;"></div>
<div style="position:absolute;left:548px;top:470px;width:78px;height:1px;background:#ffffff;"></div>
<div style="position:absolute;left:625px;top:410px;width:1px;height:61px;background:#ffffff;"></div>
<div style="position:absolute;left:549px;top:411px;width:76px;height:1px;background:#ffffff;"></div>
<div style="position:absolute;left:549px;top:411px;width:1px;height:59px;background:#ffffff;"></div>
<div style="position:absolute;left:549px;top:469px;width:76px;height:1px;background:#808080;"></div>
<div style="position:absolute;left:624px;top:411px;width:1px;height:59px;background:#808080;"></div>
<div style="position:absolute;left:555px;top:410px;width:47px;height:2px;background:#d4d0c8;"></div>
<div class="t" style="left:557.07px;top:406px;font-size:12px;transform:scaleX(0.9333);transform-origin:0 0;">Interface</div>
<div class="t" style="left:562.11px;top:426px;font-size:12px;transform:scaleX(0.8868);transform-origin:0 0;">Burst rate:</div>
<div style="position:absolute;left:557px;top:442px;width:59px;height:18px;background:#000;"></div>
<div style="position:absolute;left:557px;top:442px;width:59px;height:1px;background:#808080;"></div>
<div style="position:absolute;left:557px;top:442px;width:1px;height:18px;background:#808080;"></div>
<div style="position:absolute;left:557px;top:459px;width:59px;height:1px;background:#ffffff;"></div>
<div style="position:absolute;left:615px;top:442px;width:1px;height:18px;background:#ffffff;"></div>
<div class="t" style="left:557px;width:59px;text-align:center;top:444px;font-size:12px;font-weight:bold;color:#00ffff;letter-spacing:0.3px;text-indent:0.3px">40 MB/s</div>
<div style="position:absolute;left:10px;top:398px;width:449px;height:11px;background:#d4d0c8;"></div>
<div style="position:absolute;left:10px;top:398px;width:449px;height:1px;background:#808080;"></div>
<div style="position:absolute;left:10px;top:398px;width:1px;height:11px;background:#808080;"></div>
<div style="position:absolute;left:10px;top:408px;width:449px;height:1px;background:#ffffff;"></div>
<div style="position:absolute;left:458px;top:398px;width:1px;height:11px;background:#ffffff;"></div>
<svg style="position:absolute;left:12px;top:400px" width="445" height="7" shape-rendering="crispEdges"><rect x="0" y="0" width="4" height="7" fill="#0a246a"/><rect x="6" y="0" width="4" height="7" fill="#0a246a"/><rect x="12" y="0" width="4" height="7" fill="#0a246a"/><rect x="18" y="0" width="4" height="7" fill="#0a246a"/><rect x="24" y="0" width="4" height="7" fill="#0a246a"/><rect x="30" y="0" width="4" height="7" fill="#0a246a"/><rect x="36" y="0" width="4" height="7" fill="#0a246a"/><rect x="42" y="0" width="4" height="7" fill="#0a246a"/><rect x="48" y="0" width="4" height="7" fill="#0a246a"/><rect x="54" y="0" width="4" height="7" fill="#0a246a"/><rect x="60" y="0" width="4" height="7" fill="#0a246a"/><rect x="66" y="0" width="4" height="7" fill="#0a246a"/><rect x="72" y="0" width="4" height="7" fill="#0a246a"/><rect x="78" y="0" width="4" height="7" fill="#0a246a"/><rect x="84" y="0" width="4" height="7" fill="#0a246a"/><rect x="90" y="0" width="4" height="7" fill="#0a246a"/><rect x="96" y="0" width="4" height="7" fill="#0a246a"/><rect x="102" y="0" width="4" height="7" fill="#0a246a"/><rect x="108" y="0" width="4" height="7" fill="#0a246a"/><rect x="114" y="0" width="4" height="7" fill="#0a246a"/><rect x="120" y="0" width="4" height="7" fill="#0a246a"/><rect x="126" y="0" width="4" height="7" fill="#0a246a"/><rect x="132" y="0" width="4" height="7" fill="#0a246a"/><rect x="138" y="0" width="4" height="7" fill="#0a246a"/><rect x="144" y="0" width="4" height="7" fill="#0a246a"/><rect x="150" y="0" width="4" height="7" fill="#0a246a"/><rect x="156" y="0" width="4" height="7" fill="#0a246a"/><rect x="162" y="0" width="4" height="7" fill="#0a246a"/><rect x="168" y="0" width="4" height="7" fill="#0a246a"/><rect x="174" y="0" width="4" height="7" fill="#0a246a"/><rect x="180" y="0" width="4" height="7" fill="#0a246a"/><rect x="186" y="0" width="4" height="7" fill="#0a246a"/><rect x="192" y="0" width="4" height="7" fill="#0a246a"/><rect x="198" y="0" width="4" height="7" fill="#0a246a"/><rect x="204" y="0" width="4" height="7" fill="#0a246a"/><rect x="210" y="0" width="4" height="7" fill="#0a246a"/><rect x="216" y="0" width="4" height="7" fill="#0a246a"/><rect x="222" y="0" width="4" height="7" fill="#0a246a"/><rect x="228" y="0" width="4" height="7" fill="#0a246a"/><rect x="234" y="0" width="4" height="7" fill="#0a246a"/><rect x="240" y="0" width="4" height="7" fill="#0a246a"/><rect x="246" y="0" width="4" height="7" fill="#0a246a"/><rect x="252" y="0" width="4" height="7" fill="#0a246a"/><rect x="258" y="0" width="4" height="7" fill="#0a246a"/><rect x="264" y="0" width="4" height="7" fill="#0a246a"/><rect x="270" y="0" width="4" height="7" fill="#0a246a"/><rect x="276" y="0" width="4" height="7" fill="#0a246a"/><rect x="282" y="0" width="4" height="7" fill="#0a246a"/><rect x="288" y="0" width="4" height="7" fill="#0a246a"/><rect x="294" y="0" width="4" height="7" fill="#0a246a"/><rect x="300" y="0" width="4" height="7" fill="#0a246a"/><rect x="306" y="0" width="4" height="7" fill="#0a246a"/><rect x="312" y="0" width="4" height="7" fill="#0a246a"/><rect x="318" y="0" width="4" height="7" fill="#0a246a"/><rect x="324" y="0" width="4" height="7" fill="#0a246a"/><rect x="330" y="0" width="4" height="7" fill="#0a246a"/><rect x="336" y="0" width="4" height="7" fill="#0a246a"/><rect x="342" y="0" width="4" height="7" fill="#0a246a"/><rect x="348" y="0" width="4" height="7" fill="#0a246a"/><rect x="354" y="0" width="4" height="7" fill="#0a246a"/><rect x="360" y="0" width="4" height="7" fill="#0a246a"/><rect x="366" y="0" width="4" height="7" fill="#0a246a"/><rect x="372" y="0" width="4" height="7" fill="#0a246a"/><rect x="378" y="0" width="4" height="7" fill="#0a246a"/><rect x="384" y="0" width="4" height="7" fill="#0a246a"/><rect x="390" y="0" width="4" height="7" fill="#0a246a"/><rect x="396" y="0" width="4" height="7" fill="#0a246a"/><rect x="402" y="0" width="4" height="7" fill="#0a246a"/><rect x="408" y="0" width="4" height="7" fill="#0a246a"/><rect x="414" y="0" width="4" height="7" fill="#0a246a"/><rect x="420" y="0" width="4" height="7" fill="#0a246a"/><rect x="426" y="0" width="4" height="7" fill="#0a246a"/><rect x="432" y="0" width="4" height="7" fill="#0a246a"/><rect x="438" y="0" width="4" height="7" fill="#0a246a"/><rect x="444" y="0" width="1" height="7" fill="#0a246a"/></svg>
<div style="position:absolute;left:10px;top:412px;width:449px;height:60px;background:#ffffff;"></div>
<div style="position:absolute;left:10px;top:412px;width:449px;height:1px;background:#808080;"></div>
<div style="position:absolute;left:10px;top:412px;width:1px;height:60px;background:#808080;"></div>
<div style="position:absolute;left:10px;top:471px;width:449px;height:1px;background:#ffffff;"></div>
<div style="position:absolute;left:458px;top:412px;width:1px;height:60px;background:#ffffff;"></div>
<div style="position:absolute;left:11px;top:413px;width:447px;height:1px;background:#404040;"></div>
<div style="position:absolute;left:11px;top:413px;width:1px;height:58px;background:#404040;"></div>
<div style="position:absolute;left:11px;top:470px;width:447px;height:1px;background:#d4d0c8;"></div>
<div style="position:absolute;left:457px;top:413px;width:1px;height:58px;background:#d4d0c8;"></div>
<div style="position:absolute;left:441px;top:414px;width:16px;height:56px;background:#d4d0c8;"></div>
<svg style="position:absolute;left:441px;top:430px" width="16" height="16"><defs><pattern id="chk" width="2" height="2" patternUnits="userSpaceOnUse"><rect width="2" height="2" fill="#d4d0c8"/><rect width="1" height="1" fill="#fff"/><rect x="1" y="1" width="1" height="1" fill="#fff"/></pattern></defs><rect width="16" height="16" fill="url(#chk)"/></svg>
<div style="position:absolute;left:441px;top:414px;width:16px;height:16px;background:#d4d0c8;"></div>
<div style="position:absolute;left:442px;top:415px;width:14px;height:1px;background:#ffffff;"></div>
<div style="position:absolute;left:442px;top:415px;width:1px;height:14px;background:#ffffff;"></div>
<div style="position:absolute;left:441px;top:429px;width:16px;height:1px;background:#404040;"></div>
<div style="position:absolute;left:456px;top:414px;width:1px;height:16px;background:#404040;"></div>
<div style="position:absolute;left:442px;top:428px;width:14px;height:1px;background:#808080;"></div>
<div style="position:absolute;left:455px;top:415px;width:1px;height:14px;background:#808080;"></div>
<svg style="position:absolute;left:445px;top:420px" width="7" height="4" shape-rendering="crispEdges"><rect x="3" y="0" width="1" height="1"/><rect x="2" y="1" width="3" height="1"/><rect x="1" y="2" width="5" height="1"/><rect x="0" y="3" width="7" height="1"/></svg>
<div style="position:absolute;left:441px;top:446px;width:16px;height:8px;background:#d4d0c8;"></div>
<div style="position:absolute;left:442px;top:447px;width:14px;height:1px;background:#ffffff;"></div>
<div style="position:absolute;left:442px;top:447px;width:1px;height:6px;background:#ffffff;"></div>
<div style="position:absolute;left:441px;top:453px;width:16px;height:1px;background:#404040;"></div>
<div style="position:absolute;left:456px;top:446px;width:1px;height:8px;background:#404040;"></div>
<div style="position:absolute;left:442px;top:452px;width:14px;height:1px;background:#808080;"></div>
<div style="position:absolute;left:455px;top:447px;width:1px;height:6px;background:#808080;"></div>
<div style="position:absolute;left:441px;top:454px;width:16px;height:16px;background:#d4d0c8;"></div>
<div style="position:absolute;left:442px;top:455px;width:14px;height:1px;background:#ffffff;"></div>
<div style="position:absolute;left:442px;top:455px;width:1px;height:14px;background:#ffffff;"></div>
<div style="position:absolute;left:441px;top:469px;width:16px;height:1px;background:#404040;"></div>
<div style="position:absolute;left:456px;top:454px;width:1px;height:16px;background:#404040;"></div>
<div style="position:absolute;left:442px;top:468px;width:14px;height:1px;background:#808080;"></div>
<div style="position:absolute;left:455px;top:455px;width:1px;height:14px;background:#808080;"></div>
<svg style="position:absolute;left:445px;top:460px" width="7" height="4" shape-rendering="crispEdges"><rect x="0" y="0" width="7" height="1"/><rect x="1" y="1" width="5" height="1"/><rect x="2" y="2" width="3" height="1"/><rect x="3" y="3" width="1" height="1"/></svg>
<div class="t" style="left:30.10px;top:415px;font-size:12px;transform:scaleX(0.9038);transform-origin:0 0;">[17:51:18]</div>
<div class="t" style="left:88.10px;top:415px;font-size:12px;transform:scaleX(0.8952);transform-origin:0 0;">Elapsed Time:  0:54</div>
<div class="t" style="left:30.10px;top:429px;font-size:12px;transform:scaleX(0.9038);transform-origin:0 0;">[17:51:18]</div>
<div class="t" style="left:88.13px;top:429px;font-size:12px;transform:scaleX(0.8718);transform-origin:0 0;">Starting burst rate test</div>
<div class="t" style="left:30.10px;top:443px;font-size:12px;transform:scaleX(0.9038);transform-origin:0 0;">[17:51:20]</div>
<div class="t" style="left:88.09px;top:443px;font-size:12px;transform:scaleX(0.9113);transform-origin:0 0;">Interface burst rate: 40 MB/sec (40724 KB/sec)</div>
<div class="t" style="left:30.10px;top:457px;font-size:12px;transform:scaleX(0.9038);transform-origin:0 0;">[17:51:20]</div>
<div class="t" style="left:88.10px;top:457px;font-size:12px;transform:scaleX(0.8952);transform-origin:0 0;">Elapsed Time:  0:02</div>
<svg style="position:absolute;left:16px;top:428px" width="13" height="13" shape-rendering="crispEdges"><rect x="3" y="0" width="1" height="1" fill="#999"/><rect x="8" y="0" width="1" height="1" fill="#000"/><rect x="9" y="0" width="1" height="1" fill="#000"/><rect x="1" y="1" width="1" height="1" fill="#999"/><rect x="5" y="1" width="1" height="1" fill="#0000ff"/><rect x="9" y="1" width="1" height="1" fill="#000"/><rect x="10" y="1" width="1" height="1" fill="#000"/><rect x="4" y="2" width="1" height="1" fill="#0000ff"/><rect x="5" y="2" width="1" height="1" fill="#0000ff"/><rect x="6" y="2" width="1" height="1" fill="#0000ff"/><rect x="10" y="2" width="1" height="1" fill="#000"/><rect x="0" y="3" width="1" height="1" fill="#aaa"/><rect x="11" y="3" width="1" height="1" fill="#000"/><rect x="5" y="4" width="1" height="1" fill="#0000ff"/><rect x="6" y="4" width="1" height="1" fill="#0000ff"/><rect x="11" y="4" width="1" height="1" fill="#888"/><rect x="0" y="5" width="1" height="1" fill="#000"/><rect x="5" y="5" width="1" height="1" fill="#0000ff"/><rect x="6" y="5" width="1" height="1" fill="#0000ff"/><rect x="11" y="5" width="1" height="1" fill="#000"/><rect x="1" y="6" width="1" height="1" fill="#000"/><rect x="5" y="6" width="1" height="1" fill="#0000ff"/><rect x="6" y="6" width="1" height="1" fill="#0000ff"/><rect x="9" y="6" width="1" height="1" fill="#000"/><rect x="10" y="6" width="1" height="1" fill="#000"/><rect x="11" y="6" width="1" height="1" fill="#000"/><rect x="2" y="7" width="1" height="1" fill="#000"/><rect x="8" y="7" width="1" height="1" fill="#000"/><rect x="10" y="7" width="1" height="1" fill="#000"/><rect x="3" y="8" width="1" height="1" fill="#000"/><rect x="5" y="8" width="1" height="1" fill="#000"/><rect x="8" y="8" width="1" height="1" fill="#000"/><rect x="9" y="8" width="1" height="1" fill="#000"/><rect x="4" y="9" width="1" height="1" fill="#000"/><rect x="5" y="9" width="1" height="1" fill="#000"/><rect x="7" y="9" width="1" height="1" fill="#000"/><rect x="5" y="10" width="1" height="1" fill="#000"/><rect x="7" y="10" width="1" height="1" fill="#000"/><rect x="6" y="11" width="1" height="1" fill="#000"/></svg>
</body></html>
